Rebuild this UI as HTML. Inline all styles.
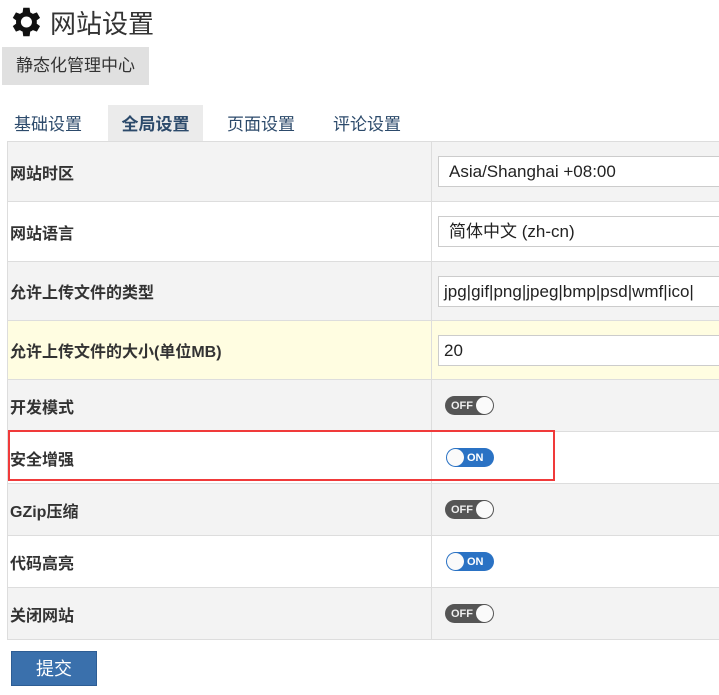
<!DOCTYPE html>
<html><head><meta charset="utf-8"><style>
*{box-sizing:border-box;margin:0;padding:0}
body{width:719px;height:695px;overflow:hidden;background:#fff;font-family:"Liberation Sans","Noto Sans CJK SC",sans-serif;color:#333;position:relative}
.title{position:absolute;left:6px;top:3px;font-size:26px;color:#333;display:flex;align-items:center}
.title svg{margin-right:6px}
.btn1{position:absolute;left:2px;top:47px;width:147px;height:38px;background:#e0e0e0;font-size:17px;line-height:38px;text-align:center;color:#333}
.tabs{position:absolute;left:0;top:105px;height:36px}
.tab{position:absolute;top:0;height:36px;line-height:40px;font-size:17px;color:#2c4a6b;white-space:nowrap}
.tab.act{background:#ebebeb;font-weight:bold;text-align:center}
table{position:absolute;left:7px;top:141px;width:740px;border-collapse:collapse;table-layout:fixed}
td{border:1px solid #ddd;font-size:16px;font-weight:bold;color:#333;padding-left:2px}
td.k{width:424px}
td.v{padding-left:6px;font-weight:normal}
tr.g td{background:#f3f3f3}
tr.y td{background:#fffde1}
.inp{height:31px;border:1px solid #ccc;background:#fff;font-size:17px;line-height:29px;padding-left:10px;color:#222;white-space:nowrap;overflow:hidden;width:300px}
.sw{width:49px;height:19px;border-radius:10px;position:relative;margin-left:7px}
.off{background:#555}
.off:before{content:"OFF";position:absolute;left:6px;top:4px;font-size:11px;font-weight:bold;color:#eee;line-height:12px}
.off:after{content:"";position:absolute;right:1px;top:1px;width:17px;height:17px;border-radius:50%;background:#fafafa}
.on{background:#2a72c4;margin-left:8px;width:48px}
.on:before{content:"ON";position:absolute;left:21px;top:4px;font-size:11px;font-weight:bold;color:#fff;line-height:12px}
.on:after{content:"";position:absolute;left:1px;top:1px;width:17px;height:17px;border-radius:50%;background:#fafafa}
.red{position:absolute;left:8px;top:430px;width:547px;height:51px;border:2px solid #f03a3a}
.submit{position:absolute;left:11px;top:651px;width:86px;height:35px;background:#3a70ac;color:#fff;font-size:18px;line-height:35px;text-align:center;border:1px solid #2d5d94}
</style></head><body>
<div class="title"><svg width="38" height="38" viewBox="0 0 24 24"><path fill="#111" d="M19.4 13a7.5 7.5 0 0 0 0-2l2.1-1.6-2-3.5-2.5 1a7.5 7.5 0 0 0-1.7-1L14.9 3h-4l-.4 2.9a7.5 7.5 0 0 0-1.7 1l-2.5-1-2 3.5L6.4 11a7.5 7.5 0 0 0 0 2l-2.1 1.6 2 3.5 2.5-1a7.5 7.5 0 0 0 1.7 1l.4 2.9h4l.4-2.9a7.5 7.5 0 0 0 1.7-1l2.5 1 2-3.5zM12.9 15.5a3.5 3.5 0 1 1 0-7 3.5 3.5 0 0 1 0 7z"/></svg>网站设置</div>
<div class="btn1">静态化管理中心</div>
<div class="tabs">
<div class="tab" style="left:14px">基础设置</div>
<div class="tab act" style="left:108px;width:95px">全局设置</div>
<div class="tab" style="left:227px">页面设置</div>
<div class="tab" style="left:333px">评论设置</div>
</div>
<table>
<tr class="g" style="height:60px"><td class="k">网站时区</td><td class="v"><div class="inp">Asia/Shanghai +08:00</div></td></tr>
<tr style="height:60px"><td class="k">网站语言</td><td class="v"><div class="inp">简体中文 (zh-cn)</div></td></tr>
<tr class="g" style="height:59px"><td class="k">允许上传文件的类型</td><td class="v"><div class="inp" style="padding-left:5px">jpg|gif|png|jpeg|bmp|psd|wmf|ico|</div></td></tr>
<tr class="y" style="height:59px"><td class="k">允许上传文件的大小(单位MB)</td><td class="v"><div class="inp" style="padding-left:5px">20</div></td></tr>
<tr class="g" style="height:52px"><td class="k">开发模式</td><td class="v"><div class="sw off"></div></td></tr>
<tr style="height:52px"><td class="k">安全增强</td><td class="v"><div class="sw on"></div></td></tr>
<tr class="g" style="height:52px"><td class="k">GZip压缩</td><td class="v"><div class="sw off"></div></td></tr>
<tr style="height:52px"><td class="k">代码高亮</td><td class="v"><div class="sw on"></div></td></tr>
<tr class="g" style="height:52px"><td class="k">关闭网站</td><td class="v"><div class="sw off"></div></td></tr>
</table>
<div class="red"></div>
<div class="submit">提交</div>
</body></html>
